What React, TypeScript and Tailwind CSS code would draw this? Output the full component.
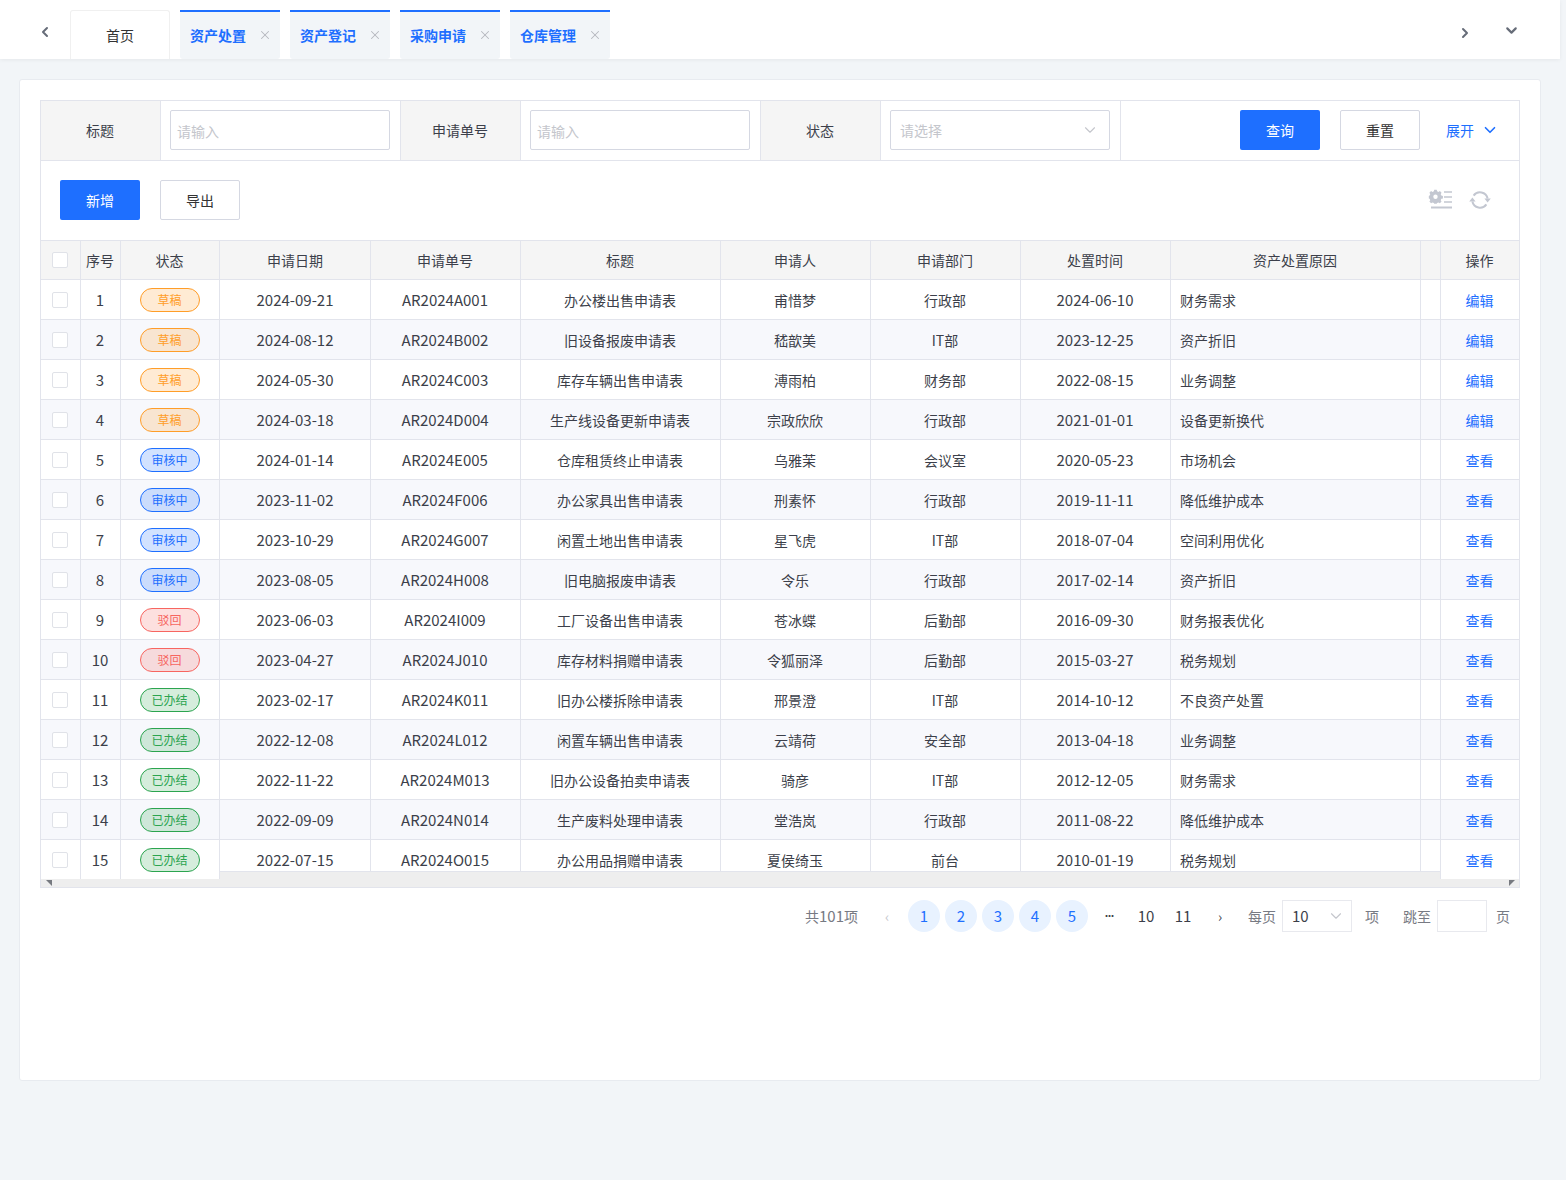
import { ChevronDown, ChevronLeft, ChevronRight, X } from 'lucide-react'

const tabs = ['资产处置', '资产登记', '采购申请', '仓库管理']

const columns = [
  { label: '申请日期', key: 'date', latin: true },
  { label: '申请单号', key: 'no', latin: true },
  { label: '标题', key: 'title', latin: false },
  { label: '申请人', key: 'user', latin: false },
  { label: '申请部门', key: 'dept', latin: false },
  { label: '处置时间', key: 'time', latin: true },
] as const

const rows = [
  { date: '2024-09-21', no: 'AR2024A001', title: '办公楼出售申请表', user: '甫惜梦', dept: '行政部', time: '2024-06-10', reason: '财务需求', status: '草稿' },
  { date: '2024-08-12', no: 'AR2024B002', title: '旧设备报废申请表', user: '嵇歆美', dept: 'IT部', time: '2023-12-25', reason: '资产折旧', status: '草稿' },
  { date: '2024-05-30', no: 'AR2024C003', title: '库存车辆出售申请表', user: '溥雨柏', dept: '财务部', time: '2022-08-15', reason: '业务调整', status: '草稿' },
  { date: '2024-03-18', no: 'AR2024D004', title: '生产线设备更新申请表', user: '宗政欣欣', dept: '行政部', time: '2021-01-01', reason: '设备更新换代', status: '草稿' },
  { date: '2024-01-14', no: 'AR2024E005', title: '仓库租赁终止申请表', user: '乌雅茉', dept: '会议室', time: '2020-05-23', reason: '市场机会', status: '审核中' },
  { date: '2023-11-02', no: 'AR2024F006', title: '办公家具出售申请表', user: '刑素怀', dept: '行政部', time: '2019-11-11', reason: '降低维护成本', status: '审核中' },
  { date: '2023-10-29', no: 'AR2024G007', title: '闲置土地出售申请表', user: '星飞虎', dept: 'IT部', time: '2018-07-04', reason: '空间利用优化', status: '审核中' },
  { date: '2023-08-05', no: 'AR2024H008', title: '旧电脑报废申请表', user: '令乐', dept: '行政部', time: '2017-02-14', reason: '资产折旧', status: '审核中' },
  { date: '2023-06-03', no: 'AR2024I009', title: '工厂设备出售申请表', user: '苍冰蝶', dept: '后勤部', time: '2016-09-30', reason: '财务报表优化', status: '驳回' },
  { date: '2023-04-27', no: 'AR2024J010', title: '库存材料捐赠申请表', user: '令狐丽泽', dept: '后勤部', time: '2015-03-27', reason: '税务规划', status: '驳回' },
  { date: '2023-02-17', no: 'AR2024K011', title: '旧办公楼拆除申请表', user: '邢景澄', dept: 'IT部', time: '2014-10-12', reason: '不良资产处置', status: '已办结' },
  { date: '2022-12-08', no: 'AR2024L012', title: '闲置车辆出售申请表', user: '云靖荷', dept: '安全部', time: '2013-04-18', reason: '业务调整', status: '已办结' },
  { date: '2022-11-22', no: 'AR2024M013', title: '旧办公设备拍卖申请表', user: '骑彦', dept: 'IT部', time: '2012-12-05', reason: '财务需求', status: '已办结' },
  { date: '2022-09-09', no: 'AR2024N014', title: '生产废料处理申请表', user: '堂浩岚', dept: '行政部', time: '2011-08-22', reason: '降低维护成本', status: '已办结' },
  { date: '2022-07-15', no: 'AR2024O015', title: '办公用品捐赠申请表', user: '夏侯绮玉', dept: '前台', time: '2010-01-19', reason: '税务规划', status: '已办结' },
]

const pillStyles: Record<string, string> = {
  草稿: 'border-[#ff9d28] bg-[#ff9d28]/20 text-[#ff9d28]',
  审核中: 'border-[#1e6fff] bg-[#1e6fff]/20 text-[#1e6fff]',
  驳回: 'border-[#f76560] bg-[#f76560]/20 text-[#f76560]',
  已办结: 'border-[#2ba44f] bg-[#2ba44f]/20 text-[#2ba44f]',
}

const gridCols = 'grid grid-cols-[40px_40px_100px_150px_150px_200px_150px_150px_150px_250px_20px_79px]'
const cell = 'flex items-center justify-center border-l border-[#e2e4ec] pr-px'
const fixedCell = 'relative z-20 flex items-center justify-center border-l border-[#e2e4ec] pr-px'

function Checkbox() {
  return <span className="block h-4 w-4 rounded-[2px] border border-[#e0e2e8] bg-white" />
}

function Label({ text }: { text: string }) {
  return <div className="flex items-center justify-center border-l border-[#e2e4ec] bg-[#f5f5f5] pb-[2px] pr-px">{text}</div>
}

function SettingsIcon() {
  return (
    <svg width="26" height="22" viewBox="0 0 26 22" fill="none">
      <path
        d="M7 1.5h3l.5 2 1.6.7 1.8-1 2 2-1 1.8.7 1.6 2 .5v3l-2 .5-.7 1.6 1 1.8-2 2-1.8-1-1.6.7-.5 1H7l-.5-1-1.6-.7-1.8 1-2-2 1-1.8-.7-1.6-1-.5v-3l1-.5.7-1.6-1-1.8 2-2 1.8 1 1.6-.7z"
        transform="translate(0.5 -0.5) scale(0.82)"
        fill="#c3c7d1"
      />
      <circle cx="7.5" cy="7.8" r="2.2" fill="#fff" />
      <path d="M16 3h8M16 8h8M16 13h8" stroke="#c3c7d1" strokeWidth="1.5" />
      <path d="M3 18.5h21" stroke="#c3c7d1" strokeWidth="2" />
    </svg>
  )
}

function RefreshIcon() {
  return (
    <svg width="22" height="22" viewBox="0 0 22 22" fill="none">
      <path d="M4.6 6.6A7.8 7.8 0 0 1 18.6 9.5" stroke="#c3c7d1" strokeWidth="2" />
      <path d="M17.4 15.4A7.8 7.8 0 0 1 3.4 12.5" stroke="#c3c7d1" strokeWidth="2" />
      <path d="M15.4 9.5h6.4l-3.2 4zM0.2 12.5h6.4l-3.2-4z" fill="#c3c7d1" />
    </svg>
  )
}

function ScrollArrow({ flip }: { flip?: boolean }) {
  return (
    <svg width="6" height="6" viewBox="0 0 6 6" className={flip ? 'rotate-[-90deg]' : ''}>
      <path d="M0 0h6v6z" fill="#777a80" />
    </svg>
  )
}

export default function App() {
  return (
    <div className="min-h-[1180px] bg-[#f2f5f8] font-['Noto_Sans_CJK_SC',sans-serif] text-sm text-[#3c3f4a]">
      {/* Tabs */}
      <header className="flex h-[59px] w-[1560px] items-end bg-white shadow-[0_1px_4px_rgba(0,0,0,0.06)]">
        <div className="h-[49px] w-[70px] pl-[37px] pt-[14px]">
          <ChevronLeft size={16} strokeWidth={3} className="text-[#666c78]" />
        </div>
        <div className="flex h-[49px] w-[100px] items-center justify-center rounded-t-[3px] border border-b-0 border-[#f0f0f0] text-[#333]">
          首页
        </div>
        {tabs.map((tab) => (
          <div
            key={tab}
            className="ml-[10px] flex h-[49px] w-[100px] items-center justify-between rounded-b-[3px] border-t-2 border-[#1e6fff] bg-[#f2f5f8] pb-[2px] pl-[10px] pr-[8px] font-semibold text-[#1e6fff]"
          >
            {tab}
            <X size={14} strokeWidth={1.75} className="text-[#b5b8bf]" />
          </div>
        ))}
        <div className="ml-auto flex h-[49px] items-start pr-[40px] pt-[15px]">
          <ChevronRight size={16} strokeWidth={3} className="mr-[30px] text-[#666c78]" />
          <ChevronDown size={17} strokeWidth={3} className="-mt-[3px] text-[#666c78]" />
        </div>
      </header>

      <main className="ml-[19px] mt-[20px] h-[1002px] w-[1522px] rounded-[3px] border border-[#e8ebf0] bg-white p-[20px]">
        {/* Search */}
        <div className="grid h-[61px] grid-cols-[120px_240px_120px_240px_120px_240px_399px] border-y border-r border-[#e2e4ec]">
          <Label text="标题" />
          <div className="border-l border-[#e2e4ec] pl-[9px] pr-[10px] pt-[9px]">
            <div className="flex h-10 w-full items-center rounded-[2px] border border-[#d5d8e2] pl-[6px] pt-[1px] text-[#c4c6cc]">请输入</div>
          </div>
          <Label text="申请单号" />
          <div className="border-l border-[#e2e4ec] pl-[9px] pr-[10px] pt-[9px]">
            <div className="flex h-10 w-full items-center rounded-[2px] border border-[#d5d8e2] pl-[6px] pt-[1px] text-[#c4c6cc]">请输入</div>
          </div>
          <Label text="状态" />
          <div className="border-l border-[#e2e4ec] pl-[9px] pr-[10px] pt-[9px]">
            <div className="flex h-10 w-full items-center justify-between rounded-[2px] border border-[#d5d8e2] pl-[9px] pr-[10px] text-[#c4c6cc]">
              请选择
              <ChevronDown size={18} strokeWidth={1.5} className="text-[#c4c6cc]" />
            </div>
          </div>
          <div className="flex items-start border-l border-[#e2e4ec] pl-[119px] pt-[9px]">
            <button className="h-10 w-20 rounded-[2px] bg-[#1e6fff] text-white">查询</button>
            <button className="ml-5 h-10 w-20 rounded-[2px] border border-[#d5d8e2] text-[#333]">重置</button>
            <span className="ml-[26px] mt-[10px] text-[#1e6fff]">展开</span>
            <ChevronDown size={18} strokeWidth={2.2} className="ml-[7px] mt-[11px] text-[#1e6fff]" />
          </div>
        </div>

        {/* Toolbar */}
        <div className="flex h-[79px] items-start border-x border-[#e2e4ec] pl-[19px] pr-[28px] pt-[19px]">
          <button className="h-10 w-20 rounded-[2px] bg-[#1e6fff] text-white">新增</button>
          <button className="ml-5 h-10 w-20 rounded-[2px] border border-[#d5d8e2] text-[#333]">导出</button>
          <div className="ml-auto mt-[9px] flex items-center gap-[15px]">
            <SettingsIcon />
            <RefreshIcon />
          </div>
        </div>

        {/* Table */}
        <div className="relative h-[648px] overflow-hidden">
          <div className={`${gridCols} h-10 border-y border-r border-[#e2e4ec] bg-[#f5f5f5]`}>
            <div className={cell}>
              <Checkbox />
            </div>
            <div className={cell}>序号</div>
            <div className={`${cell} border-r`}>状态</div>
            {columns.map((col) => (
              <div key={col.key} className={col.key === 'date' ? 'flex items-center justify-center' : cell}>
                {col.label}
              </div>
            ))}
            <div className={cell}>资产处置原因</div>
            <div className={cell} />
            <div className={cell}>操作</div>
          </div>
          {rows.map((row, i) => {
            const bg = i % 2 === 1 ? 'bg-[#f7f8fc]' : 'bg-white'
            return (
              <div key={row.no} className={`${gridCols} h-10 border-b border-r border-[#e2e4ec] ${bg}`}>
                <div className={`${fixedCell} ${bg}`}>
                  <Checkbox />
                </div>
                <div className={`${fixedCell} ${bg} text-[15px]`}>{i + 1}</div>
                <div className={`${fixedCell} ${bg} border-r`}>
                  <span className={`flex h-6 w-[60px] items-center justify-center rounded-full border text-xs ${pillStyles[row.status]}`}>
                    {row.status}
                  </span>
                </div>
                {columns.map((col) => (
                  <div
                    key={col.key}
                    className={`${col.key === 'date' ? 'flex items-center justify-center' : cell} ${col.latin ? 'text-[15px]' : ''}`}
                  >
                    {row[col.key]}
                  </div>
                ))}
                <div className="flex items-center border-l border-[#e2e4ec] pl-[9px]">{row.reason}</div>
                <div className={cell} />
                <div className={`${fixedCell} ${bg} text-[#1e6fff]`}>{i < 4 ? '编辑' : '查看'}</div>
              </div>
            )
          })}
          {/* Horizontal scrollbar */}
          <div className="absolute bottom-0 left-0 right-0 z-10 h-[17px] border border-[#e2e4ec] bg-[#eeeeee]" />
          <div className="absolute bottom-[2px] left-[6px] z-30 flex">
            <ScrollArrow />
          </div>
          <div className="absolute bottom-[2px] right-[5px] z-30 flex">
            <ScrollArrow flip />
          </div>
        </div>

        {/* Pagination */}
        <div className="mt-[12px] flex h-8 items-center justify-end pr-[10px] text-[#777a83]">
          <span className="mr-[13px]">
            共<span className="text-[15px]">101</span>项
          </span>
          <span className="flex h-8 w-8 items-center justify-center text-[#c4c6cc]">‹</span>
          <div className="ml-[5px] flex gap-[5px] text-[15px]">
            {[1, 2, 3, 4, 5].map((n) => (
              <span key={n} className="flex h-8 w-8 items-center justify-center rounded-full bg-[#e8f2ff] text-[#1e6fff]">
                {n}
              </span>
            ))}
            <span className="flex h-8 w-8 items-center justify-center font-['Inter'] text-xs font-bold tracking-[-1px] text-[#3c3f4a]">···</span>
            {[10, 11].map((n) => (
              <span key={n} className="flex h-8 w-8 items-center justify-center text-[#3c3f4a]">
                {n}
              </span>
            ))}
            <span className="flex h-8 w-8 items-center justify-center text-sm text-[#3c3f4a]">›</span>
          </div>
          <span className="ml-[12px]">每页</span>
          <div className="ml-[6px] flex h-8 w-[70px] items-center justify-between border border-[#e8e9ee] pl-[9px] pr-[6px] text-[15px] text-[#3c3f4a]">
            10
            <ChevronDown size={18} strokeWidth={1.5} className="text-[#c4c6cc]" />
          </div>
          <span className="ml-[13px]">项</span>
          <span className="ml-[24px]">跳至</span>
          <div className="ml-[6px] h-8 w-[50px] border border-[#e8e9ee]" />
          <span className="ml-[9px]">页</span>
        </div>
      </main>
    </div>
  )
}
